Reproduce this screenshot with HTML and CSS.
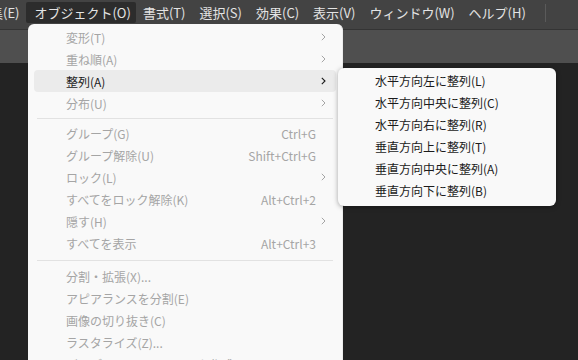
FILE: index.html
```html
<!DOCTYPE html>
<html lang="ja">
<head>
    <meta charset="UTF-8">
    <title>オブジェクト メニュー</title>
    <link rel="stylesheet" href="styles.css">
</head>
<body>
    <div class="menubar">
        <span class="top-item">編集(E)</span>
        <span class="top-item open">オブジェクト(O)</span>
        <span class="top-item">書式(T)</span>
        <span class="top-item">選択(S)</span>
        <span class="top-item">効果(C)</span>
        <span class="top-item">表示(V)</span>
        <span class="top-item">ウィンドウ(W)</span>
        <span class="top-item">ヘルプ(H)</span>
        <span class="bar-sep"></span>
    </div>
    <div class="toolbar"></div>
    <div class="canvas"></div>

    <div class="menu main-menu">
        <div class="item off"><span class="label">変形(T)</span><span class="keys"></span><span class="arrow"><svg width="5" height="8" viewBox="0 0 5 8"><path d="M0.8 0.8 L4 4 L0.8 7.2" fill="none" stroke="currentColor" stroke-width="1"/></svg></span></div>
        <div class="item off"><span class="label">重ね順(A)</span><span class="keys"></span><span class="arrow"><svg width="5" height="8" viewBox="0 0 5 8"><path d="M0.8 0.8 L4 4 L0.8 7.2" fill="none" stroke="currentColor" stroke-width="1"/></svg></span></div>
        <div class="item hot"><span class="label">整列(A)</span><span class="keys"></span><span class="arrow"><svg width="5" height="8" viewBox="0 0 5 8"><path d="M0.8 0.8 L4 4 L0.8 7.2" fill="none" stroke="currentColor" stroke-width="1.1"/></svg></span></div>
        <div class="item off"><span class="label">分布(U)</span><span class="keys"></span><span class="arrow"><svg width="5" height="8" viewBox="0 0 5 8"><path d="M0.8 0.8 L4 4 L0.8 7.2" fill="none" stroke="currentColor" stroke-width="1"/></svg></span></div>
        <div class="sep"></div>
        <div class="item off"><span class="label">グループ(G)</span><span class="keys">Ctrl+G</span><span class="arrow"></span></div>
        <div class="item off"><span class="label">グループ解除(U)</span><span class="keys">Shift+Ctrl+G</span><span class="arrow"></span></div>
        <div class="item off"><span class="label">ロック(L)</span><span class="keys"></span><span class="arrow"><svg width="5" height="8" viewBox="0 0 5 8"><path d="M0.8 0.8 L4 4 L0.8 7.2" fill="none" stroke="currentColor" stroke-width="1"/></svg></span></div>
        <div class="item off"><span class="label">すべてをロック解除(K)</span><span class="keys">Alt+Ctrl+2</span><span class="arrow"></span></div>
        <div class="item off"><span class="label">隠す(H)</span><span class="keys"></span><span class="arrow"><svg width="5" height="8" viewBox="0 0 5 8"><path d="M0.8 0.8 L4 4 L0.8 7.2" fill="none" stroke="currentColor" stroke-width="1"/></svg></span></div>
        <div class="item off"><span class="label">すべてを表示</span><span class="keys">Alt+Ctrl+3</span><span class="arrow"></span></div>
        <div class="sep wide"></div>
        <div class="item off"><span class="label">分割・拡張(X)...</span><span class="keys"></span><span class="arrow"></span></div>
        <div class="item off"><span class="label">アピアランスを分割(E)</span><span class="keys"></span><span class="arrow"></span></div>
        <div class="item off"><span class="label">画像の切り抜き(C)</span><span class="keys"></span><span class="arrow"></span></div>
        <div class="item off"><span class="label">ラスタライズ(Z)...</span><span class="keys"></span><span class="arrow"></span></div>
        <div class="item off"><span class="label">グラデーションメッシュを作成(D)...</span><span class="keys"></span><span class="arrow"></span></div>
    </div>

    <div class="menu sub-menu">
        <div class="sub-item">水平方向左に整列(L)</div>
        <div class="sub-item">水平方向中央に整列(C)</div>
        <div class="sub-item">水平方向右に整列(R)</div>
        <div class="sub-item">垂直方向上に整列(T)</div>
        <div class="sub-item">垂直方向中央に整列(A)</div>
        <div class="sub-item">垂直方向下に整列(B)</div>
    </div>
</body>
</html>
```

FILE: styles.css
```css
html, body {
    margin: 0;
    height: 100%;
    overflow: hidden;
}
body {
    display: flex;
    flex-direction: column;
    background-color: #232323;
    font-family: "Noto Sans CJK JP", "Noto Sans", sans-serif;
    position: relative;
}
.menubar {
    height: 30px;
    flex: none;
    display: flex;
    align-items: flex-start;
    background-color: #434343;
    border-bottom: 1px solid #343434;
    box-sizing: border-box;
    padding-top: 2px;
    margin-left: -30px;
    color: #e4e4e4;
    font-size: 13px;
}
.top-item {
    height: 21px;
    line-height: 21px;
    padding: 0 7px;
    border-radius: 2px;
    white-space: nowrap;
}
.top-item.open {
    background-color: #2c2c2c;
    padding: 0 5px 0 8px;
}
.bar-sep {
    width: 1px;
    height: 18px;
    margin: 2px 0 0 12px;
    background-color: #5a5a5a;
}
.toolbar {
    height: 33px;
    flex: none;
    background-color: #4f4f4f;
}
.canvas {
    flex: 1;
    background-color: #232323;
}

/* menus */
.menu {
    position: absolute;
    background-color: #f9f9f9;
    font-size: 12px;
    box-sizing: border-box;
}
.main-menu {
    left: 28px;
    top: 24px;
    width: 315px;
    padding: 2px 6px;
    border-radius: 6px 6px 0 0;
    border-right: 1px solid #ececec;
    height: 340px;
    overflow: hidden;
}
.item {
    display: flex;
    align-items: center;
    height: 22px;
    padding-left: 32px;
    border-radius: 4px;
    white-space: nowrap;
}
.item .label {
    flex: 1;
}
.item .keys {
    text-align: right;
}
.item .arrow {
    width: 20px;
    display: flex;
    padding-left: 5px;
    box-sizing: border-box;
}
.item.off {
    color: #a5a5a5;
}
.item.hot {
    background-color: #ebebeb;
    color: #1b1b1b;
}
.sep {
    height: 1px;
    margin: 4px 3px 3px 3px;
    background-color: #e2e2e2;
}
.sep.wide {
    margin: 6px 3px 4px 3px;
}
.sub-menu {
    left: 338px;
    top: 68px;
    width: 218px;
    padding: 2px 0 4px 0;
    border-radius: 6px;
    box-shadow: 0 1px 5px rgba(0, 0, 0, 0.35);
    color: #1b1b1b;
}
.sub-item {
    height: 22px;
    line-height: 22px;
    padding-left: 37px;
    white-space: nowrap;
}
```
